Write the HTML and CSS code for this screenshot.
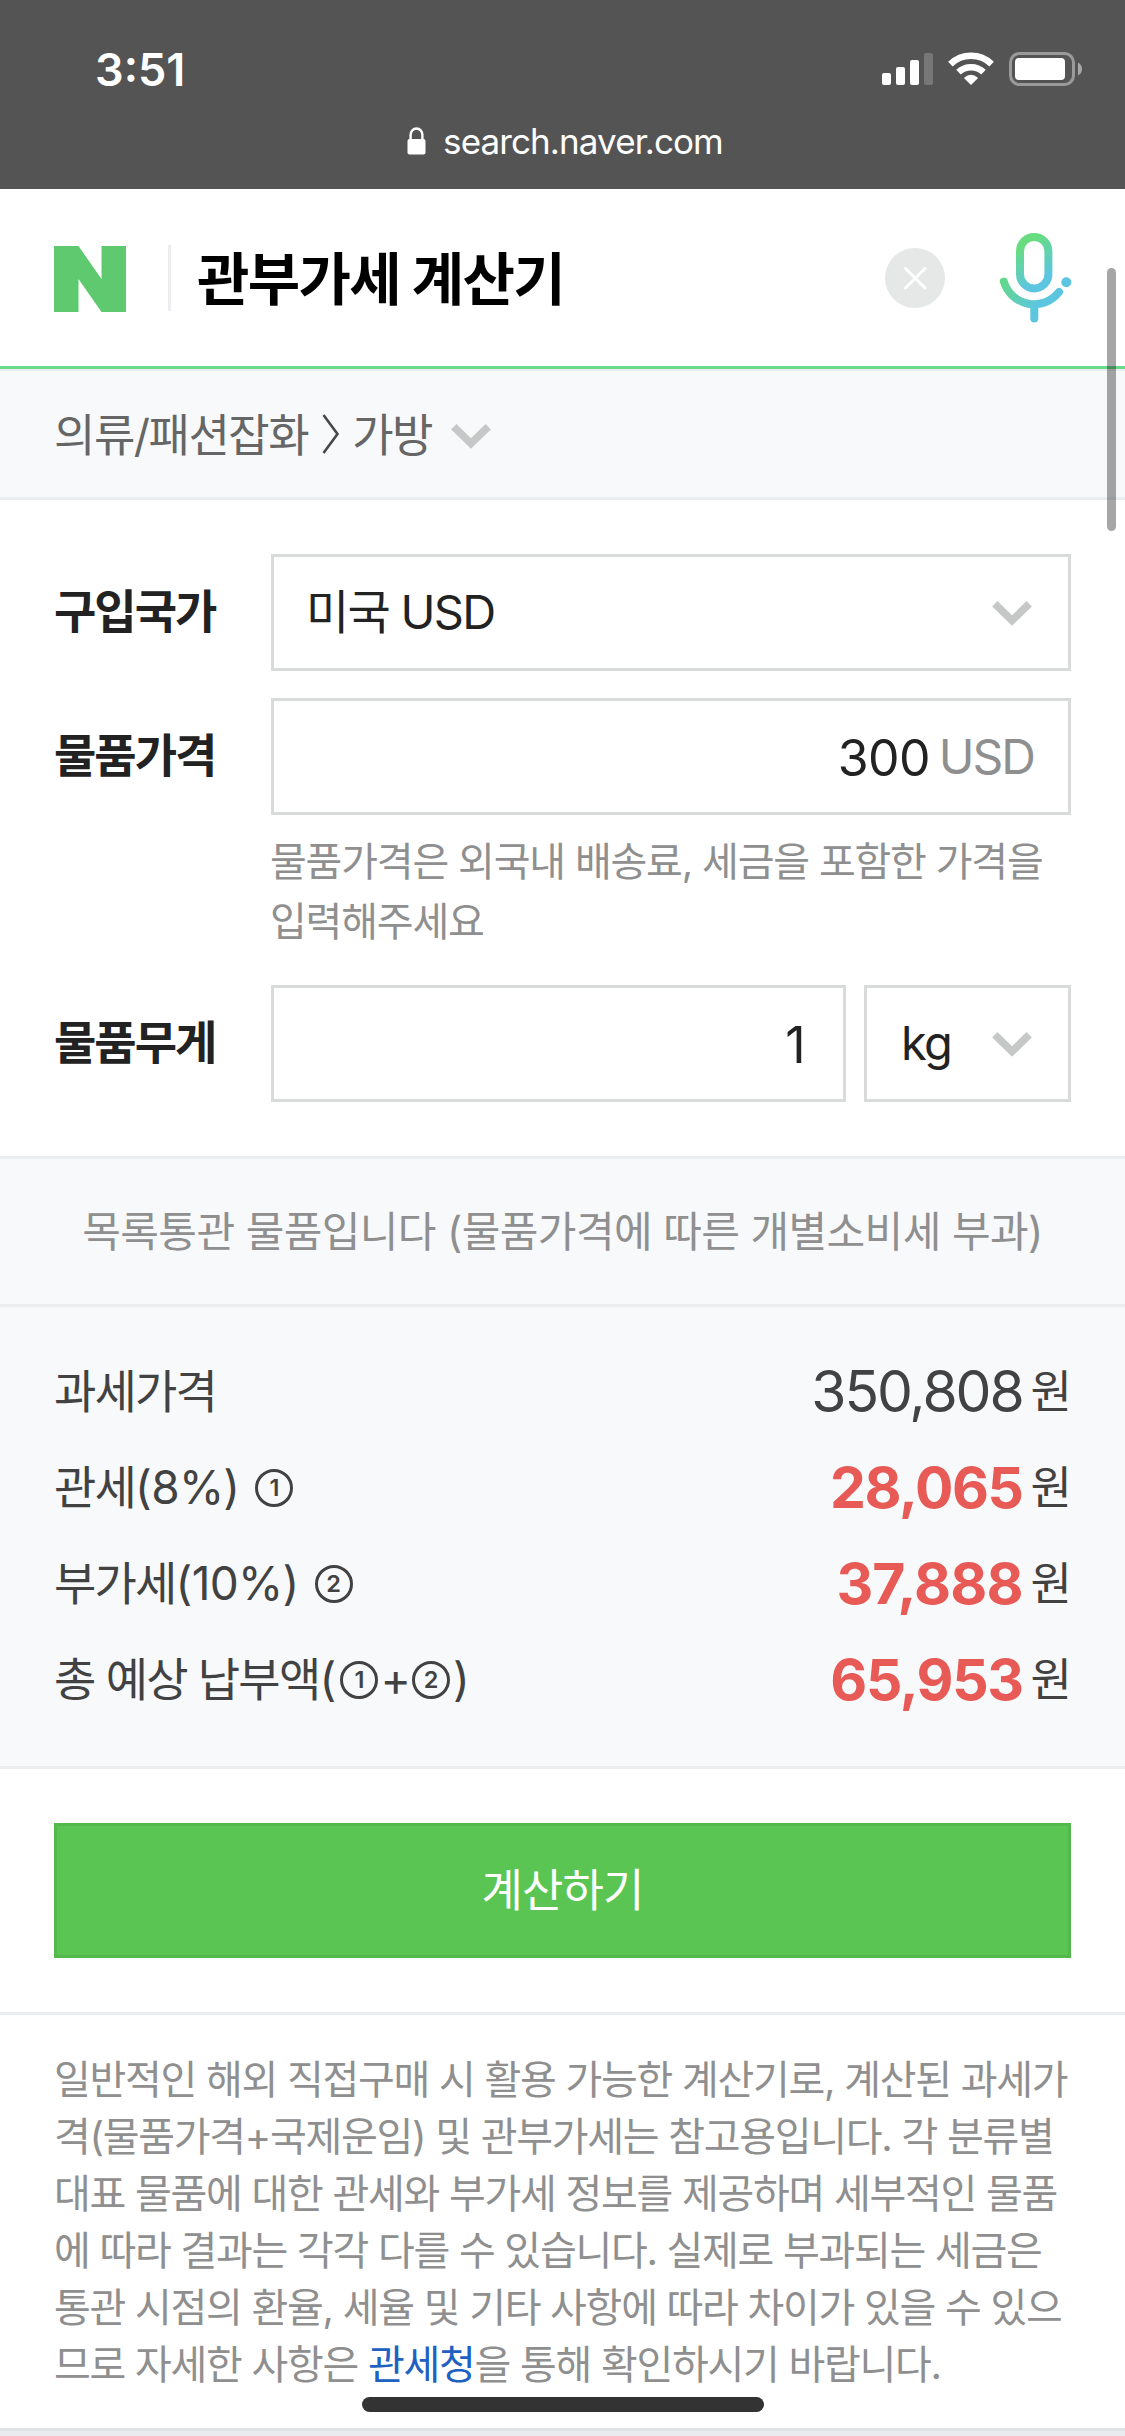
FILE: index.html
```html
<!DOCTYPE html>
<html lang="ko">
<head>
<meta charset="utf-8">
<title>관부가세 계산기</title>
<link rel="stylesheet" href="styles.css">
</head>
<body>
<div class="page">
  <header class="browser">
    <div class="status">
      <span class="clock">3:51</span>
      <svg class="status-icons" width="204" height="40" viewBox="880 50 204 40">
        <g fill="#fff">
          <rect x="882" y="73" width="9" height="12" rx="2"/>
          <rect x="896" y="67" width="9" height="18" rx="2"/>
          <rect x="910" y="60" width="9" height="25" rx="2"/>
          <rect x="924" y="53" width="9" height="32" rx="2" fill="#777"/>
          <path d="M971 85L963.9 78Q971 71.600 978.100 78Z"/>
        </g>
        <g fill="none" stroke="#fff" stroke-width="6.500">
          <path d="M950.400 64.200A29.600 29.600 0 0 1 991.600 64.200"/>
          <path d="M958.500 72.200A18.200 18.200 0 0 1 983.500 72.200"/>
        </g>
        <rect x="1010.500" y="53.500" width="63" height="31" rx="9" fill="none" stroke="#9a9a9a" stroke-width="3"/>
        <rect x="1015" y="58" width="50" height="22" rx="4" fill="#fff"/>
        <path d="M1078 62.500Q1082 64.500 1082 69T1078 75.500Z" fill="#a8a8a8"/>
      </svg>
    </div>
    <div class="address">
      <svg width="19" height="28" viewBox="0 0 19 28">
        <path d="M3.600 14V8a5.900 6.500 0 0 1 11.800 0V14" fill="none" stroke="#fff" stroke-width="2.400"/>
        <rect x="0.500" y="12" width="18" height="15.500" rx="2" fill="#fff"/>
      </svg>
      <span class="url">search.naver.com</span>
    </div>
  </header>

  <div class="search">
    <svg class="logo" width="72" height="66" viewBox="0 0 72 66"><path d="M0 0H24.500L47.500 33V0H72V66H47.500L24.500 33V66H0Z" fill="#5ec96f"/></svg>
    <span class="divider"></span>
    <h1 class="query">관부가세 계산기</h1>
    <svg class="clear" width="60" height="60" viewBox="0 0 60 60">
      <circle cx="30" cy="30" r="30" fill="#e6e8e8"/>
      <path d="M20.500 20.500L40 40M40 20.500L20.500 40" stroke="#fff" stroke-width="2.800" stroke-linecap="round"/>
    </svg>
    <svg class="mic" width="74" height="92" viewBox="999 232 74 92">
      <defs>
        <linearGradient id="pill" gradientUnits="userSpaceOnUse" x1="1024" y1="245" x2="1044" y2="277"><stop offset="0" stop-color="#68dc80"/><stop offset="1" stop-color="#5cc6e0"/></linearGradient>
        <linearGradient id="arc" gradientUnits="userSpaceOnUse" x1="1002" y1="280" x2="1040" y2="300"><stop offset="0" stop-color="#62d888"/><stop offset="1" stop-color="#5cc6e0"/></linearGradient>
      </defs>
      <rect x="1020" y="237" width="28.400" height="51.400" rx="14.200" fill="none" stroke="url(#pill)" stroke-width="8"/>
      <path d="M1003.800 281.500A31.500 31.500 0 0 0 1059 292M1034.300 305V318.500" fill="none" stroke="url(#arc)" stroke-width="8" stroke-linecap="round"/>
      <circle cx="1066.300" cy="282.300" r="5" fill="#5cc6e0"/>
    </svg>
  </div>

  <div class="category">
    <span class="category-text">의류/패션잡화</span>
    <svg class="crumb" width="18" height="40" viewBox="0 0 18 40"><path d="M1.500 1L15.500 20L1.500 39" fill="none" stroke="#484848" stroke-width="2.600"/></svg>
    <span class="category-text">가방</span>
    <svg class="chevron" width="40" height="25" viewBox="0 0 40 25"><path d="M2.800 2.800L20 19.500L37.200 2.800" fill="none" stroke="#c6c8c8" stroke-width="7.600"/></svg>
  </div>

  <form class="form">
    <div class="row">
      <label class="label">구입국가</label>
      <div class="box select"><span class="value">미국 USD</span><svg class="chevron" width="40" height="25" viewBox="0 0 40 25"><path d="M2.800 2.800L20 19.500L37.200 2.800" fill="none" stroke="#c6c8c8" stroke-width="7.600"/></svg></div>
    </div>
    <div class="row price">
      <label class="label">물품가격</label>
      <div class="box number"><span class="amount">300</span><span class="unit">USD</span></div>
    </div>
    <p class="hint">물품가격은 외국내 배송료, 세금을 포함한 가격을<br>입력해주세요</p>
    <div class="row weight">
      <label class="label">물품무게</label>
      <div class="box number weight-box"><span class="amount">1</span></div>
      <div class="box select kg"><span class="value">kg</span><svg class="chevron" width="40" height="25" viewBox="0 0 40 25"><path d="M2.800 2.800L20 19.500L37.200 2.800" fill="none" stroke="#c6c8c8" stroke-width="7.600"/></svg></div>
    </div>
  </form>

  <p class="notice">목록통관 물품입니다 (물품가격에 따른 개별소비세 부과)</p>

  <dl class="result">
    <div class="line"><dt>과세가격</dt><dd><span class="sum plain">350,808</span><span class="won">원</span></dd></div>
    <div class="line"><dt>관세<span class="rate">(8%)</span><span class="circled ref">1</span></dt><dd><span class="sum">28,065</span><span class="won">원</span></dd></div>
    <div class="line"><dt>부가세<span class="rate">(10%)</span><span class="circled ref">2</span></dt><dd><span class="sum vat">37,888</span><span class="won">원</span></dd></div>
    <div class="line"><dt>총 예상 납부액(<span class="circled first">1</span>+<span class="circled">2</span>)</dt><dd><span class="sum">65,953</span><span class="won">원</span></dd></div>
  </dl>

  <div class="action"><button class="submit" type="button">계산하기</button></div>

  <p class="note">일반적인 해외 직접구매 시 활용 가능한 계산기로, 계산된 과세가<br>격(물품가격+국제운임) 및 관부가세는 참고용입니다. 각 분류별<br>대표 물품에 대한 관세와 부가세 정보를 제공하며 세부적인 물품<br>에 따라 결과는 각각 다를 수 있습니다. 실제로 부과되는 세금은<br>통관 시점의 환율, 세율 및 기타 사항에 따라 차이가 있을 수 있으<br>므로 자세한 사항은 <a class="link">관세청</a>을 통해 확인하시기 바랍니다.</p>
  <div class="next"></div>
  <div class="scrollbar"></div>
  <div class="home"></div>
</div>
</body>
</html>
```
FILE: styles.css
```css
* { box-sizing: border-box; margin: 0; padding: 0; }
body { background: #fff; }
.page {
  position: relative;
  width: 1125px;
  height: 2436px;
  overflow: hidden;
  background: #fff;
  color: #222;
  font-family: Inter, "Noto Sans CJK KR", sans-serif;
  white-space: nowrap;
}
svg { display: block; flex: none; }

.browser { height: 189px; background: #545454; color: #fff; }
.status {
  display: flex;
  justify-content: space-between;
  height: 110px;
  padding: 50px 41px 0 95px;
}
.clock { font-size: 45px; font-weight: 600; line-height: 40px; }
.address { display: flex; justify-content: center; align-items: center; gap: 17px; height: 62px; padding-left: 5px; }
.url { font-size: 35px; line-height: 60px; letter-spacing: -.9px; }

.search {
  display: flex;
  align-items: center;
  height: 180px;
  padding: 1px 52px 0 54px;
  border-bottom: 3px solid #6cda8b;
}
.logo { margin-top: 2px; }
.divider { width: 3px; height: 66px; margin: 0 26px 0 42px; background: #ebedf1; }
.query { flex: 1; padding-top: 4px; font-size: 57px; font-weight: 700; line-height: 70px; letter-spacing: -1.7px; color: #000; }
.clear { margin-right: 54px; }

.category {
  display: flex;
  align-items: center;
  height: 131px;
  padding-left: 54px;
  background: #f8f9fb;
  border-top: 2px solid #ebeef1;
  border-bottom: 3px solid #ebeef1;
}
.category-text { padding-top: 3px; font-size: 45px; line-height: 60px; letter-spacing: -1.5px; color: #666; }
.crumb { margin: 0 12px 0 14px; }
.category .chevron { margin: 4px 0 0 19px; }

.form { height: 656px; padding: 54px 54px 0; }
.row { display: flex; align-items: center; height: 117px; }
.price { margin-top: 27px; }
.label { width: 217px; padding-bottom: 3px; font-size: 46px; font-weight: 700; line-height: 60px; letter-spacing: -2px; }
.box { display: flex; align-items: center; flex: 1; height: 117px; border: 3px solid #d9dbdb; padding: 0 34px; }
.select { justify-content: space-between; padding: 0 36px 0 32px; }
.number { justify-content: flex-end; }
.value { padding-bottom: 1px; font-size: 47px; line-height: 60px; letter-spacing: -1.7px; }
.amount { padding-top: 2px; font-size: 50px; line-height: 60px; letter-spacing: -.6px; }
.unit { margin-left: 9px; font-size: 48px; line-height: 60px; letter-spacing: -2px; color: #8f8f8f; }
.weight-box { padding-right: 38px; }
.hint { height: 170px; padding: 17px 0 0 216px; font-size: 40px; line-height: 60px; letter-spacing: -1.2px; color: #8f8f8f; }
.kg { flex: none; width: 207px; margin-left: 18px; padding-left: 34px; }
.select .chevron { margin-top: 2px; }

.notice {
  height: 151px;
  background: #f8f9fb;
  border-top: 3px solid #ebedee;
  border-bottom: 3px solid #ebedee;
  text-align: center;
  font-size: 42px;
  line-height: 145px;
  letter-spacing: -.6px;
  color: #8f8f8f;
}
.result {
  height: 462px;
  padding: 36px 54px 0;
  background: #f8f9fb;
  border-bottom: 3px solid #ebedee;
  color: #424242;
}
.line { display: flex; justify-content: space-between; align-items: center; height: 96px; }
.line dt { display: flex; align-items: center; font-size: 46px; line-height: 60px; letter-spacing: -1.8px; }
.rate { letter-spacing: -.7px; }
.circled {
  display: flex;
  align-items: center;
  justify-content: center;
  width: 38px;
  height: 38px;
  margin: 2px 3px 0;
  border: 3px solid #424242;
  border-radius: 50%;
  font-size: 23.5px;
  font-weight: 600;
  line-height: 32px;
  letter-spacing: 0;
}
.ref { margin-left: 16px; }
.first { margin: 2px 2px 0 6px; }
.line dd { display: flex; align-items: center; padding-top: 2px; }
.sum { font-size: 57px; font-weight: 700; line-height: 60px; letter-spacing: -1.4px; color: #e85a55; }
.vat { letter-spacing: -.9px; }
.plain { font-weight: 400; color: #424242; letter-spacing: -2.1px; }
.won { margin-left: 8px; font-size: 45px; line-height: 60px; letter-spacing: -1px; }

.action { height: 246px; padding: 54px 54px 0; border-bottom: 3px solid #ebeef1; }
.submit {
  display: block;
  width: 100%;
  height: 135px;
  border: 3px solid #54b94c;
  background: #5ac553;
  color: #fff;
  font: 400 45px/120px Inter, "Noto Sans CJK KR", sans-serif;
  letter-spacing: -.9px;
}
.note { height: 413px; padding: 36px 54px 0; font-size: 40px; line-height: 57px; letter-spacing: -1.29px; color: #8f8f8f; }
.link { color: #2060c0; }
.next { height: 8px; background: #e9ebef; border-top: 3px solid #e0e2e6; }
.scrollbar { position: absolute; left: 1107px; top: 268px; width: 9px; height: 263px; border-radius: 5px; background: rgba(0, 0, 0, .35); }
.home { position: absolute; left: 362px; top: 2397px; width: 402px; height: 15px; border-radius: 8px; background: #333; }
```
